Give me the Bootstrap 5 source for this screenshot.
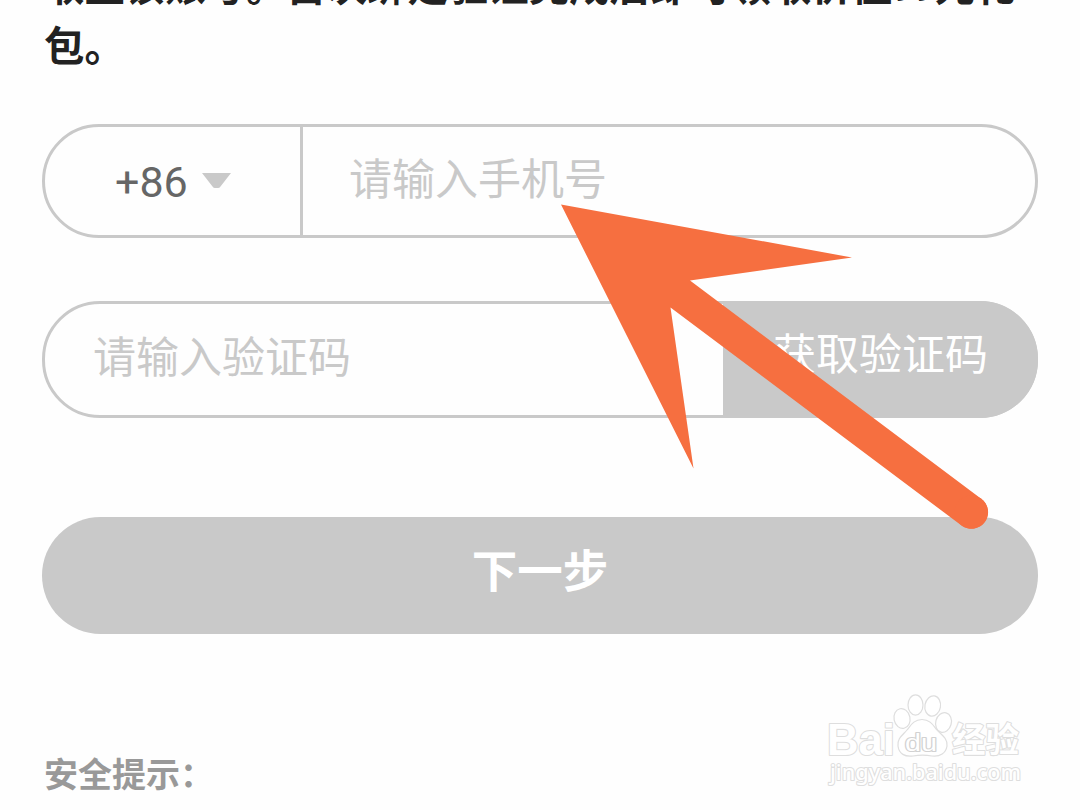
<!DOCTYPE html>
<html lang="zh-CN">
<head>
    <meta charset="UTF-8">
    <meta name="viewport" content="width=device-width, initial-scale=1.0">
    <title>绑定手机号</title>
    <link href="https://cdn.jsdelivr.net/npm/bootstrap@5.3.0/dist/css/bootstrap.min.css" rel="stylesheet">
    <style>
        :root {
            --line-color: #c9c9c9;
        }
        body {
            height: 810px;
            overflow: hidden;
            background-color: #fefefe;
            font-family: "Noto Sans CJK SC", sans-serif;
        }
        .bind-page {
            height: 810px;
            padding: 0 42px;
        }
        .bind-notice {
            height: 124px;
            padding-left: 2px;
            color: #222;
            font-size: 40.4px;
            font-weight: 700;
            line-height: 60px;
        }
        .bind-notice p {
            margin-top: -46px;
        }
        .gift-value {
            font-family: Roboto, sans-serif;
            font-size: 37px;
            line-height: 1;
        }
        .pill-field {
            border: 3px solid var(--line-color);
            border-radius: 58px;
        }
        .phone-field {
            height: 114px;
        }
        .code-field {
            height: 117px;
            margin-top: 63px;
        }
        .area-code {
            width: 258px;
            padding: 2px 0 0 70px;
            border-right: 3px solid var(--line-color);
            color: #666;
            font-family: Roboto, sans-serif;
            font-size: 43px;
        }
        .area-code svg {
            margin: -2px 0 0 14px;
        }
        .field-input,
        .field-input:focus {
            border: 0;
            border-radius: 0;
            box-shadow: none;
            background: transparent;
            font-size: 43px;
            line-height: 60px;
        }
        .field-input::placeholder {
            color: var(--line-color);
            opacity: 1;
        }
        .phone-field .field-input {
            padding: 0 0 10px 46px;
        }
        .code-field .field-input {
            padding: 0 0 12px 48px;
        }
        .btn-code {
            width: 315px;
            flex-shrink: 0;
            margin: -3px -3px -3px 0;
            padding: 0 0 17px 0;
            border: 0;
            border-radius: 0 58px 58px 0;
            font-size: 43px;
        }
        .btn-code,
        .btn-next {
            background-color: var(--line-color);
            color: #fff;
        }
        .btn-next {
            height: 117px;
            margin-top: 99px;
            padding: 0 0 14px 0;
            border: 0;
            font-size: 45.5px;
            font-weight: 700;
        }
        .safe-title {
            margin: 114px 0 0 2px;
            color: #999;
            font-size: 34px;
            font-weight: 700;
            line-height: 50px;
        }
        .overlay-art {
            pointer-events: none;
        }
    </style>
</head>
<body>
    <main class="bind-page d-flex flex-column">
        <div class="bind-notice text-nowrap">
            <p class="mb-0">取至该账号。首次绑定验证完成后即可领取价值<span class="gift-value">99</span>元礼<br>包。</p>
        </div>

        <div class="pill-field phone-field d-flex flex-shrink-0">
            <div class="area-code d-flex align-items-center flex-shrink-0">
                <span>+86</span>
                <svg class="flex-shrink-0" width="29" height="17" viewBox="0 0 29 17"><path d="M0 0H29L18.500 13.500Q17.500 15 16 15H13Q11.500 15 10.500 13.500Z" fill="#c9c9c9"/></svg>
            </div>
            <input type="tel" class="form-control field-input" placeholder="请输入手机号">
        </div>

        <div class="pill-field code-field d-flex flex-shrink-0">
            <input type="text" class="form-control field-input" placeholder="请输入验证码">
            <button type="button" class="btn btn-code">获取验证码</button>
        </div>

        <button type="button" class="btn btn-next rounded-pill w-100 flex-shrink-0">下一步</button>

        <h2 class="safe-title">安全提示：</h2>
    </main>

    <!-- pointer arrow and watermark, above the form -->
    <svg class="overlay-art position-absolute top-0 start-0" width="1080" height="810" viewBox="0 0 1080 810">
        <path d="M561 204.500L852 257.500L690 280.500L981.500 499A16.500 16.500 0 0 1 961.500 525.500L670.500 307.500L693.500 468.500Z" fill="#f66f40"/>
        <circle cx="971.300" cy="512" r="16.600" fill="#f66f40"/>
        <g fill="#fff" stroke="#dedede" stroke-width="1.2" stroke-linejoin="round">
            <ellipse cx="902" cy="718.500" rx="8" ry="10" transform="rotate(-12 902 718.500)"/>
            <ellipse cx="915.500" cy="705" rx="7.500" ry="10.200"/>
            <ellipse cx="932.700" cy="706" rx="7.800" ry="10.200" transform="rotate(10 932.700 706)"/>
            <ellipse cx="943.500" cy="722.500" rx="7.800" ry="10" transform="rotate(15 943.500 722.500)"/>
            <path d="M922 719.500C930 719.500 933 725 937 730C942 735 948 739 947 746C946 753 940 757 932 756C926 755 919 755 913 756C905 757 899 754 898 746C897 738 903 735 907 730C911 725 914 719.500 922 719.500Z"/>
            <g paint-order="stroke" stroke-width="2.2" font-weight="700">
                <text x="827" y="754.500" font-family="Liberation Sans, sans-serif" font-size="45" textLength="68" lengthAdjust="spacingAndGlyphs">Bai</text>
                <text x="905" y="751" font-family="Liberation Sans, sans-serif" font-size="23" font-weight="400" textLength="32" lengthAdjust="spacingAndGlyphs" stroke="#d2d2d2">du</text>
                <text x="952" y="751.500" font-family="Noto Sans CJK SC, sans-serif" font-size="34" textLength="67" lengthAdjust="spacingAndGlyphs">经验</text>
                <text x="830" y="780" font-family="Noto Sans, sans-serif" font-size="22.500" font-weight="500" textLength="191" lengthAdjust="spacingAndGlyphs">jingyan.baidu.com</text>
            </g>
        </g>
    </svg>

    <script src="https://cdn.jsdelivr.net/npm/bootstrap@5.3.0/dist/js/bootstrap.bundle.min.js"></script>
</body>
</html>
